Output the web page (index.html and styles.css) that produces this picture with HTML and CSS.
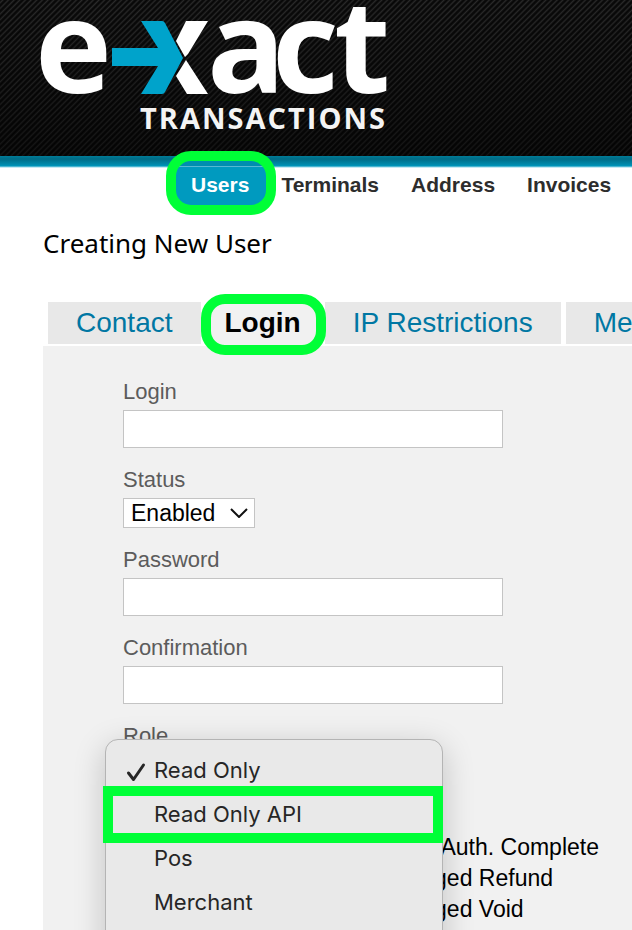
FILE: index.html
```html
<!DOCTYPE html>
<html lang="en">
<head>
<meta charset="utf-8">
<title>Creating New User</title>
<link rel="stylesheet" href="styles.css">
</head>
<body>
<div class="page">
  <header class="masthead">
    <svg class="logo" width="360" height="140" viewBox="30 0 360 140" role="img" aria-label="e-xact Transactions">
      <text class="logo-word" x="35 207 272 334" y="93">eact</text>
      <path fill="#fff" d="M186 21H208L188 54L185 57L176 41ZM186 60L208 94H187L176 76Z"/>
      <path fill="#00a3cb" d="M141 21H162Q164 21 165 23L183 58L165 92Q164 94 162 94H141L158 66H112V48H158Z"/>
      <text class="logo-sub" x="140" y="129">TRANSACTIONS</text>
    </svg>
  </header>
  <nav class="nav">
    <a class="nav-link nav-current" href="#">Users</a>
    <a class="nav-link" href="#">Terminals</a>
    <a class="nav-link" href="#">Address</a>
    <a class="nav-link" href="#">Invoices</a>
  </nav>
  <main class="content">
    <h1 class="title">Creating New User</h1>
    <div class="tabs">
      <a class="tab" href="#">Contact</a>
      <a class="tab tab-current" href="#">Login</a>
      <a class="tab" href="#">IP Restrictions</a>
      <a class="tab" href="#">Merchants</a>
    </div>
    <form class="panel">
      <div class="field">
        <label for="login">Login</label>
        <input id="login" type="text">
      </div>
      <div class="field">
        <label for="status">Status</label>
        <div class="select">
          <select id="status"><option>Enabled</option><option>Disabled</option></select>
          <svg class="chevron" width="18" height="10" viewBox="0 0 18 10" aria-hidden="true"><path d="M1 1L9 9L17 1"/></svg>
        </div>
      </div>
      <div class="field">
        <label for="password">Password</label>
        <input id="password" type="password">
      </div>
      <div class="field">
        <label for="confirmation">Confirmation</label>
        <input id="confirmation" type="password">
      </div>
      <div class="field role">
        <span class="label" id="role-label">Role</span>
        <ul class="menu" role="listbox" aria-labelledby="role-label">
          <li class="option" role="option" aria-selected="true"><svg class="check" width="20" height="20" viewBox="0 0 20 20" aria-hidden="true"><path d="M2.500 11L7.500 17.500L17.500 3"/></svg>Read Only</li>
          <li class="option option-marked" role="option">Read Only API</li>
          <li class="option" role="option">Pos</li>
          <li class="option" role="option">Merchant</li>
        </ul>
      </div>
      <ul class="permissions">
        <li>Pre-Auth. Complete</li>
        <li>Tagged Refund</li>
        <li>Tagged Void</li>
        <li>Tagged Refund</li>
      </ul>
    </form>
  </main>
</div>
</body>
</html>
```
FILE: styles.css
```css
* { box-sizing: border-box; }

body {
  margin: 0;
  background: #fff;
  color: #000;
  font-family: "Liberation Sans", Arial, sans-serif;
}

a { text-decoration: none; }
ul { list-style: none; margin: 0; padding: 0; }

.page { height: 100vh; overflow: hidden; }

.masthead {
  height: 168px;
  padding-left: 30px;
  background:
    linear-gradient(#007c99, #006c86 3px, #008db0 9px, #0098bd 10px, #8fd3e5 11px, #fff 12px) 0 156px / 100% 12px no-repeat,
    linear-gradient(rgba(0, 0, 0, 0) 0, rgba(0, 0, 0, 0.5) 156px),
    repeating-linear-gradient(135deg, #060606 0, #101010 1px, #2a2a2a 2px, #101010 3px, #060606 4px);
}

.logo { display: block; overflow: visible; }

.logo-word {
  fill: #fff;
  font: 700 130px "Open Sans", sans-serif;
}

.logo-sub {
  fill: #f4f4f4;
  font: 700 29px "Open Sans", sans-serif;
  letter-spacing: 2px;
}

.nav {
  display: flex;
  gap: 32px;
  height: 54px;
  padding-left: 191px;
  color: #2d2d2d;
  font-size: 21px;
  font-weight: 700;
  line-height: 34px;
}

.nav-link { position: relative; color: inherit; }

.nav-current { color: #fff; z-index: 1; }

.nav-current::before {
  content: "";
  position: absolute;
  z-index: -1;
  inset: -17px -27px 7px -25px;
  border: 10px solid #00ff37;
  border-radius: 25px;
  background: linear-gradient(#008db0 5px, #55b9d2 5px, #55b9d2 6px, #009abf 6px);
}

.content { padding-left: 43px; }

.title {
  margin: 0;
  height: 80px;
  font: 400 26px/42px "Noto Sans", sans-serif;
}

.tabs {
  display: flex;
  gap: 5px;
  height: 44px;
  padding: 0 0 2px 5px;
  font-size: 28px;
  line-height: 42px;
  white-space: nowrap;
}

.tab {
  flex: none;
  padding: 0 28px;
  background: #e8e8e8;
  color: #0077a3;
}

.tab-current {
  position: relative;
  z-index: 1;
  padding: 0 19px;
  background: #f1f1f1;
  color: #000;
  font-weight: 700;
}

.tab-current::before {
  content: "";
  position: absolute;
  z-index: -1;
  inset: -8px -6px -11px -5px;
  border: 10px solid #00ff37;
  border-radius: 24px;
  background: #f1f1f1;
}

.panel {
  display: flex;
  flex-direction: column;
  gap: 19px;
  min-height: 600px;
  padding: 33px 20px 0 80px;
  background: #f1f1f1;
}

.field label, .label {
  display: block;
  margin-bottom: 5px;
  color: #5c5c5c;
  font-size: 22px;
  line-height: 26px;
}

.field input {
  display: block;
  width: 100%;
  max-width: 380px;
  height: 38px;
  padding: 0 8px;
  border: 1px solid #c4c4c4;
  background: #fff;
  font: inherit;
  font-size: 23px;
}

.select { position: relative; width: 132px; }

.select select {
  display: block;
  appearance: none;
  width: 100%;
  height: 30px;
  padding: 0 7px;
  border: 1px solid #c4c4c4;
  border-radius: 0;
  background: #fff;
  color: #000;
  font: 23px/28px "Liberation Sans", Arial, sans-serif;
}

.chevron { position: absolute; right: 7px; top: 10px; }
.chevron path { fill: none; stroke: #111; stroke-width: 2; }

.role { position: relative; height: 90px; }

.menu {
  position: absolute;
  z-index: 2;
  top: 16px;
  left: -18px;
  width: 338px;
  height: 300px;
  padding-top: 8px;
  border: 1px solid #b4b4b4;
  border-radius: 13px;
  background: #e9e9e9;
  box-shadow: 0 8px 32px rgba(0, 0, 0, 0.2);
  color: #262626;
  font: 22px/44px Inter, sans-serif;
}

.option { position: relative; padding-left: 48px; }

.check { position: absolute; left: 20px; top: 14px; }
.check path { fill: none; stroke: #262626; stroke-width: 3; stroke-linecap: round; stroke-linejoin: round; }

.option-marked::after {
  content: "";
  position: absolute;
  inset: -6px -1px -7px -3px;
  border: 10px solid #00ff37;
}

.permissions {
  padding-left: 274px;
  font-size: 23px;
  line-height: 31px;
  white-space: nowrap;
}
```
